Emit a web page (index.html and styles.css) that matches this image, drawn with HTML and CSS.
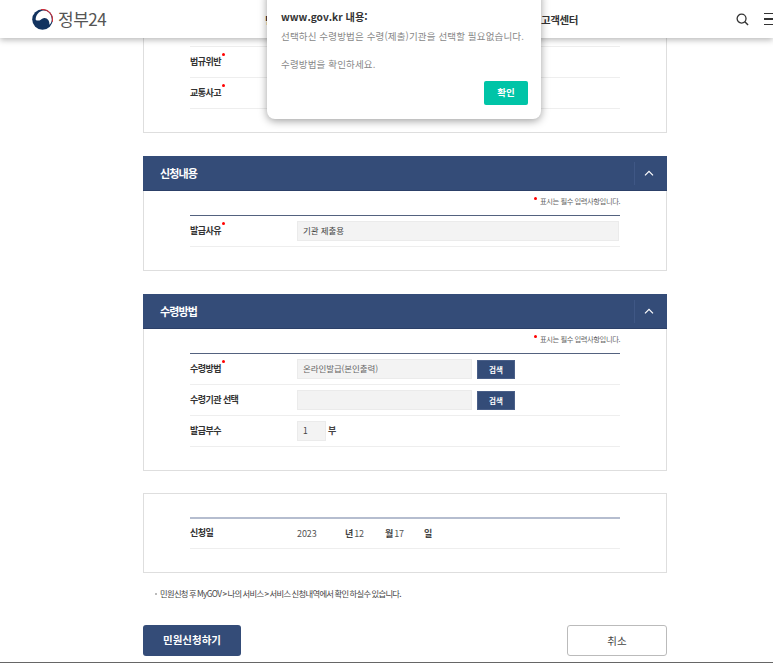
FILE: index.html
```html
<!DOCTYPE html>
<html lang="ko">
<head>
<meta charset="utf-8">
<title>정부24</title>
<link rel="stylesheet" href="styles.css">
</head>
<body>
<header class="topbar">
  <div class="logo">
    <svg class="logo-mark" viewBox="0 0 22 22" aria-hidden="true">
      <circle cx="11" cy="11" r="10.8" fill="#12335f"/>
      <path d="M3.800 11.200C3.800 6.200 7.600 2 12 1.600c5-.3 8.700 4 8.700 9.400 0 2.300-.9 4.200-2.500 5.600.6-4.200-2.300-7.500-5.500-7.100-2.300.3-2.700 2-4.800 2.500-1.800.4-3.300 0-3.900-.8z" fill="#fff"/>
      <path d="M9.500 .6A10.500 10.500 0 0 1 21.200 13.500" fill="none" stroke="#cd2e3a" stroke-width="1.100"/>
    </svg>
    <span class="logo-text">정부24</span>
  </div>
  <nav class="nav">
    <span>민원서비스</span>
    <span>고객센터</span>
  </nav>
  <div class="tools">
    <svg class="icon-search" viewBox="0 0 14 14" aria-hidden="true">
      <circle cx="6" cy="6" r="4.800" fill="none" stroke="#333" stroke-width="1.400"/>
      <path d="M9.500 9.500L13 13" stroke="#333" stroke-width="1.500" fill="none"/>
    </svg>
    <span class="burger"><i></i><i></i><i></i></span>
  </div>
</header>

<main class="page">
  <section class="panel panel-first">
    <div class="rows rows-open">
      <div class="row row-blank"></div>
      <div class="row"><span class="label req">법규위반</span></div>
      <div class="row"><span class="label req">교통사고</span></div>
    </div>
  </section>

  <section class="group">
    <div class="group-head">
      <h2>신청내용</h2>
      <span class="toggle"><svg viewBox="0 0 10 6" aria-hidden="true"><path d="M1 5.300L5 1.300l4 4" fill="none" stroke="#fff" stroke-width="1.200"/></svg></span>
    </div>
    <div class="panel panel-body">
      <p class="hint"><span class="hint-dot"></span>표시는 필수 입력사항입니다.</p>
      <div class="rows">
        <div class="row">
          <span class="label req">발급사유</span>
          <span class="field field-full dark">기관 제출용</span>
        </div>
      </div>
    </div>
  </section>

  <section class="group">
    <div class="group-head">
      <h2>수령방법</h2>
      <span class="toggle"><svg viewBox="0 0 10 6" aria-hidden="true"><path d="M1 5.300L5 1.300l4 4" fill="none" stroke="#fff" stroke-width="1.200"/></svg></span>
    </div>
    <div class="panel panel-body">
      <p class="hint"><span class="hint-dot"></span>표시는 필수 입력사항입니다.</p>
      <div class="rows">
        <div class="row">
          <span class="label req">수령방법</span>
          <span class="field field-wide">온라인발급(본인출력)</span>
          <span class="search-btn">검색</span>
        </div>
        <div class="row">
          <span class="label">수령기관 선택</span>
          <span class="field field-wide"></span>
          <span class="search-btn">검색</span>
        </div>
        <div class="row">
          <span class="label">발급부수</span>
          <span class="field field-num dark">1</span>
          <span class="unit">부</span>
        </div>
      </div>
    </div>
  </section>

  <section class="panel panel-date">
    <div class="rows rows-light">
      <div class="row">
        <span class="label">신청일</span>
        <span class="date">
          <span class="d-year">2023</span>
          <b class="d-unit d-u1">년</b><span>12</span>
          <b class="d-unit d-u2">월</b><span>17</span>
          <b class="d-unit d-u3">일</b>
        </span>
      </div>
    </div>
  </section>

  <p class="note">민원신청 후 MyGOV &gt; 나의 서비스 &gt; 서비스 신청내역에서 확인 하실수 있습니다.</p>

  <div class="actions">
    <span class="btn btn-primary">민원신청하기</span>
    <span class="btn btn-cancel">취소</span>
  </div>
</main>
<div class="page-end"></div>

<div class="dialog" role="alertdialog">
  <h3>www.gov.kr 내용:</h3>
  <p class="msg">선택하신 수령방법은 수령(제출)기관을 선택할 필요없습니다.</p>
  <p class="msg msg-2">수령방법을 확인하세요.</p>
  <div class="dialog-actions"><span class="ok">확인</span></div>
</div>
</body>
</html>
```
FILE: styles.css
```css
* { box-sizing: border-box; }
html, body { margin: 0; padding: 0; height: 663px; overflow: hidden; background: #fff; }
body {
  font-family: "Noto Sans CJK KR", "Noto Sans", sans-serif;
  color: #333;
  font-size: 9px;
}

/* header */
.topbar {
  position: absolute; left: 0; top: 0; right: 0; height: 38px;
  background: #fff;
  box-shadow: 0 2px 6px rgba(0,0,0,.28);
  z-index: 5;
  display: flex; align-items: center;
}
.logo { display: flex; align-items: center; margin-left: 32px; width: 233px; }
.logo-mark { width: 21px; height: 21px; display: block; }
.logo-text { margin-left: 5px; font-size: 17px; line-height: 22px; color: #555; letter-spacing: -.5px; }
.nav { display: flex; justify-content: space-between; width: 313px; font-size: 10.500px; font-weight: 700; color: #333; letter-spacing: -.4px; }
.tools { margin-left: auto; display: flex; align-items: center; }
.icon-search { width: 13px; height: 13px; margin-right: 15px; display: block; }
.burger { width: 12px; margin-right: -3px; display: flex; flex-direction: column; gap: 4px; }
.burger i { display: block; height: 1.200px; background: #333; }

/* page */
.page { width: 524px; margin-left: 143px; }
.panel { border: 1px solid #dedede; background: #fff; }
.panel-first { height: 133px; padding: 15px 46px 0; }
.group { margin-top: 23px; }
.group-head {
  height: 35px; background: #344c78;
  border-bottom: 1px solid #2c4068;
  display: flex; align-items: center; justify-content: space-between;
  padding-left: 17px;
}
.group-head h2 { margin: 0; font-size: 11px; font-weight: 700; color: #fff; letter-spacing: -.85px; }
.toggle { width: 33px; height: 23px; padding-right: 5px; border-left: 1px solid #3f5785; display: flex; align-items: center; justify-content: center; }
.toggle svg { width: 10px; height: 6px; display: block; }
.panel-body { border-top: 0; padding: 0 46px 23px; }
.panel-body .hint { margin: 0; height: 24px; padding-bottom: 3px; line-height: 15px; display: flex; justify-content: flex-end; align-items: center; font-size: 7.300px; letter-spacing: -.45px; color: #666; }
.hint-dot { width: 3px; height: 3px; border-radius: 50%; background: #f00; margin: -7px 3px 0 0; }

/* rows */
.rows { border-top: 1px solid #54627f; }
.rows-open { border-top: 0; }
.rows-light { border-top: 2px solid #b5bdcf; }
.row { height: 31px; border-bottom: 1px solid #eee; display: flex; align-items: center; }
.row-blank { height: 31px; }
.label { position: relative; top: -1px; width: 107px; flex: none; font-size: 9px; font-weight: 700; color: #333; letter-spacing: -.55px; }
.req::after { content: ""; position: absolute; left: 32px; top: -2px; width: 3px; height: 3px; border-radius: 50%; background: #f00; }
.field {
  display: block; height: 20px; line-height: 16px; padding-left: 5px;
  background: #f3f3f3; border: 1px solid #ebebeb;
  color: #666; font-size: 8.500px; letter-spacing: -.1px;
}
.field.dark { color: #444; }
.field-full { width: 322px; }
.field-wide { width: 175px; }
.field-num { width: 29px; padding-left: 5px; }
.search-btn {
  margin-left: 5px; width: 38px; height: 19px; line-height: 17px;
  background: #344c78; border: 1px solid #4a5f88; color: #fff;
  text-align: center; font-size: 7.500px; font-weight: 700;
}
.unit { margin: -2px 0 0 2px; font-size: 9px; font-weight: 700; color: #444; }

/* date */
.panel-date { margin-top: 22px; height: 80px; padding: 23px 46px 0; }
.panel-date .row { height: 30px; }
.date { display: flex; font-size: 9px; color: #555; letter-spacing: -.1px; }
.d-year { width: 48px; }
.d-unit { font-weight: 700; color: #444; margin-right: 1px; }
.d-u2 { margin-left: 21px; }
.d-u3 { margin-left: 20px; }

/* note */
.note { margin: 14px 0 0; height: 13px; line-height: 13px; padding-left: 17px; position: relative; font-size: 8.300px; letter-spacing: -.68px; word-spacing: -.5px; color: #444; }
.note::before { content: ""; position: absolute; left: 12px; top: 6px; width: 2px; height: 2px; background: #bbb; }

/* actions */
.actions { margin-top: 25px; display: flex; justify-content: space-between; }
.btn { display: block; height: 31px; line-height: 29px; text-align: center; border-radius: 3px; font-size: 10.500px; }
.btn-primary { width: 98px; background: #344c78; color: #fff; font-weight: 700; line-height: 30px; }
.btn-cancel { width: 100px; background: #fff; border: 1px solid #bbb; color: #444; }
.page-end { position: absolute; left: 0; right: 0; top: 662px; height: 1px; background: #666; }

/* dialog */
.dialog {
  position: absolute; left: 267px; top: -12px; width: 274px; height: 131px;
  background: #fff; border-radius: 8px;
  box-shadow: 0 2px 8px rgba(0,0,0,.38);
  padding: 21px 13px 0 14px;
  z-index: 10;
}
.dialog h3 { margin: 0; height: 16px; line-height: 16px; font-size: 10.200px; font-weight: 700; color: #333; }
.msg { margin: 3px 0 0; height: 16px; line-height: 16px; font-size: 9.500px; letter-spacing: .15px; color: #888; white-space: nowrap; }
.msg-2 { margin-top: 12px; }
.dialog-actions { display: flex; justify-content: flex-end; margin-top: 9px; }
.ok { display: block; width: 44px; height: 24px; line-height: 23px; text-align: center; background: #00c4a7; color: #fff; font-size: 9.500px; font-weight: 700; border-radius: 2px; }
```
